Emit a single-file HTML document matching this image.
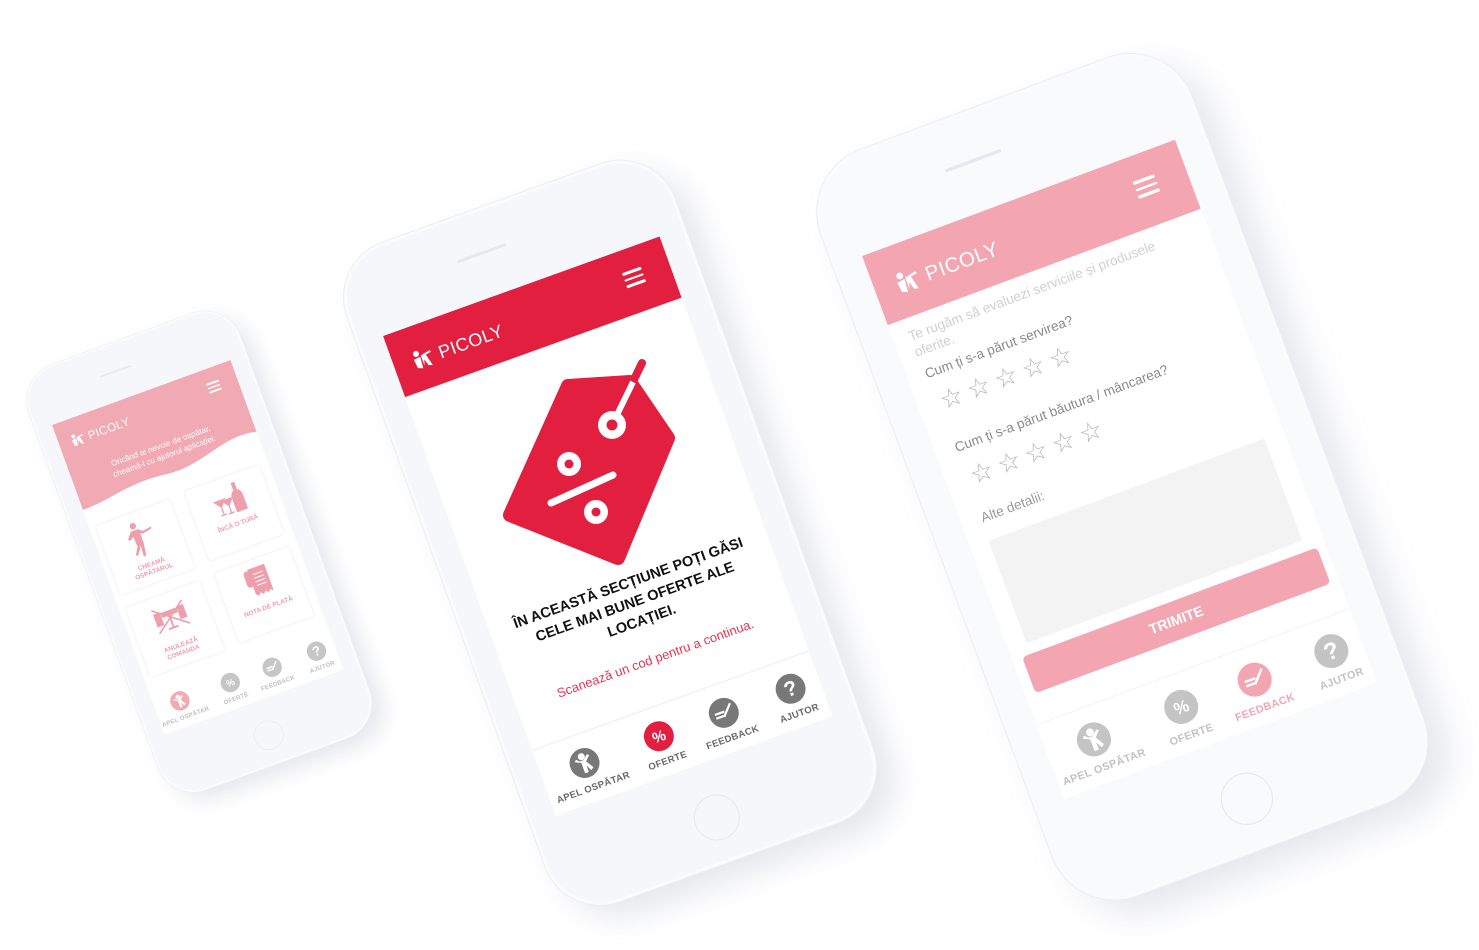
<!DOCTYPE html>
<html><head><meta charset="utf-8">
<style>
html,body{margin:0;padding:0;background:#fff;width:1479px;height:950px;overflow:hidden;font-family:"Liberation Sans",sans-serif;}
.ph{position:absolute;width:294px;height:510px;transform-origin:0 0;}
.body{position:absolute;left:-27px;top:-88px;width:348px;height:700px;border-radius:58px;background:#f6f7fa;box-shadow:0 0 0 1px #eceef3,14px 18px 30px rgba(140,145,175,0.22),inset 0 0 0 3px #fbfbfd;}
.spk{position:absolute;left:148px;top:42px;width:52px;height:3px;margin-left:-26px;border-radius:2px;background:#e6e8ee;}
.home{position:absolute;left:177px;top:653px;width:44px;height:44px;margin-left:-22px;margin-top:-22px;border-radius:50%;border:1.5px solid #e6e8ee;}
.scr{position:absolute;left:0;top:0;width:294px;height:510px;background:#fff;overflow:hidden;}
.hdr{position:absolute;left:0;top:0;width:294px;height:65px;}
.logo{position:absolute;left:18px;top:22px;height:26px;display:flex;align-items:center;color:#fff;font-size:18px;letter-spacing:0.5px;}
.ham{position:absolute;left:246px;top:22px;width:20px;}
.ham i{display:block;height:2.5px;background:#fff;margin-bottom:4px;border-radius:1px;}
.nav{position:absolute;left:0;top:440px;width:294px;height:70px;border-top:1px solid #ececec;}
.ni{position:absolute;top:14px;width:30px;height:30px;margin-left:-15px;}
.nl{position:absolute;top:50px;width:100px;margin-left:-50px;text-align:center;font-size:9.5px;font-weight:bold;color:#6a6a6a;letter-spacing:0.3px;}
.card{position:absolute;background:#fff;border-radius:4px;box-shadow:0 0 4px rgba(0,0,0,0.12);text-align:center;color:#ef9aa8;font-weight:bold;font-size:10px;}
.card span{position:absolute;left:0;right:0;}
</style></head><body>

<!-- LEFT PHONE -->
<div class="ph" style="left:52px;top:425px;transform:rotate(-20deg) scale(0.646);opacity:0.95">
 <div class="body"><div class="spk"></div><div class="home"></div></div>
 <div class="scr">
  <svg style="position:absolute;left:0;top:0" width="294" height="150"><path d="M0 0 H294 V118 C240 105 200 140 140 132 C80 124 50 140 0 140 Z" fill="#f1a5b0"/></svg>
  <div class="logo"><svg width="26" height="26" viewBox="0 0 26 26"><circle cx="7" cy="6" r="3" fill="#fff"/><path d="M3 11 L10 10 L9 22 L4 20 Z M11 9 L21 7 L22 9 L16 10 L19 22 L15 21 L13 14 L11 20 Z" fill="#fff"/></svg><span style="margin-left:3px">PICOLY</span></div>
  <div class="ham"><i></i><i></i><i></i></div>
  <div style="position:absolute;left:0;width:294px;top:80px;text-align:center;color:#fff;font-size:12.5px;line-height:17px">Oricând ai nevoie de ospătar,<br>cheamă-l cu ajutorul aplicației.</div>
  <div class="card" style="left:10px;top:170px;width:122px;height:114px">
   <svg style="position:absolute;left:36px;top:14px" width="50" height="58" viewBox="0 0 50 58"><circle cx="18" cy="6" r="5" fill="#ef9aa8"/><path d="M12 13 L24 13 L30 18 L44 16 L44 19 L29 22 L25 20 L25 36 L22 56 L18 56 L19 38 L16 44 L10 52 L7 50 L14 38 L13 22 L6 26 L4 23 Z" fill="#ef9aa8"/></svg>
   <span style="top:80px;line-height:12px">CHEAMĂ<br>OSPĂTARUL</span></div>
  <div class="card" style="left:157px;top:167px;width:123px;height:114px">
   <svg style="position:absolute;left:34px;top:10px" width="56" height="50" viewBox="0 0 56 50"><path d="M38 2 H44 V14 C50 18 50 22 50 26 V48 H32 V26 C32 22 32 18 38 14 Z" fill="#ef9aa8"/><path d="M4 22 H20 L12 32 Z M12 32 V44 M7 45 H17 M16 24 H32 L24 34 Z M24 34 V45 M19 46 H29" fill="#ef9aa8" stroke="#ef9aa8" stroke-width="2"/></svg>
   <span style="top:70px">ÎNCĂ O TURĂ</span></div>
  <div class="card" style="left:10px;top:305px;width:122px;height:114px">
   <svg style="position:absolute;left:30px;top:10px" width="62" height="56" viewBox="0 0 62 56"><path d="M6 8 L56 46 M56 8 L6 46" stroke="#ef9aa8" stroke-width="2.5"/><rect x="18" y="16" width="26" height="8" fill="#ef9aa8"/><path d="M8 16 H16 V34 H8 Z M46 16 H54 V34 H46 Z M30 24 V44 M22 44 H38" fill="#ef9aa8" stroke="#ef9aa8" stroke-width="3"/></svg>
   <span style="top:78px;line-height:12px">ANULEAZĂ<br>COMANDA</span></div>
  <div class="card" style="left:157px;top:302px;width:123px;height:114px">
   <svg style="position:absolute;left:40px;top:10px" width="44" height="52" viewBox="0 0 44 52"><rect x="2" y="4" width="10" height="26" rx="5" fill="#ef9aa8"/><path d="M10 2 H38 V46 L34 42 L30 46 L26 42 L22 46 L18 42 L14 46 L10 42 Z" fill="#ef9aa8"/><path d="M16 12 H32 M16 18 H32 M16 24 H32 M16 30 H32" stroke="#fff" stroke-width="1.5"/></svg>
   <span style="top:72px">NOTA DE PLATĂ</span></div>
  <div class="nav" style="border-top:none">
   <svg class="ni" style="left:40px" viewBox="0 0 30 30"><circle cx="15" cy="15" r="15" fill="#f1a5b0"/><circle cx="14" cy="8" r="3.5" fill="#fff"/><path d="M6 11 L12 14 L12 25 L16 25 L16 18 L19 24 L22 22 L17 14 L22 9 L20 7.5 L15 12 L11 12 L8 9 Z" fill="#fff"/></svg>
   <div class="nl" style="left:40px;color:#bdbdbd">APEL OSPĂTAR</div>
   <svg class="ni" style="left:123px" viewBox="0 0 30 30"><circle cx="15" cy="15" r="15" fill="#c4c4c4"/><text x="15" y="20.5" text-anchor="middle" font-size="15" font-weight="bold" fill="#fff" font-family="Liberation Sans">%</text></svg>
   <div class="nl" style="left:123px;color:#bdbdbd">OFERTE</div>
   <svg class="ni" style="left:192px" viewBox="0 0 30 30"><circle cx="15" cy="15" r="15" fill="#c4c4c4"/><path d="M6 14 H16 M6 18 H14 M14 19 L24 8" stroke="#fff" stroke-width="2.2"/></svg>
   <div class="nl" style="left:192px;color:#bdbdbd">FEEDBACK</div>
   <svg class="ni" style="left:265px" viewBox="0 0 30 30"><circle cx="15" cy="15" r="15" fill="#c4c4c4"/><text x="15" y="22" text-anchor="middle" font-size="21" font-weight="bold" fill="#fff" font-family="Liberation Sans">?</text></svg>
   <div class="nl" style="left:265px;color:#bdbdbd">AJUTOR</div>
  </div>
 </div>
</div>

<!-- MIDDLE PHONE -->
<div class="ph" style="left:383px;top:336px;transform:rotate(-19.8deg)">
 <div class="body"><div class="spk"></div><div class="home"></div></div>
 <div class="scr">
  <div class="hdr" style="background:#e21f3f"></div>
  <div class="logo"><svg width="26" height="26" viewBox="0 0 26 26"><circle cx="7" cy="6" r="3" fill="#fff"/><path d="M3 11 L10 10 L9 22 L4 20 Z M11 9 L21 7 L22 9 L16 10 L19 22 L15 21 L13 14 L11 20 Z" fill="#fff"/></svg><span style="margin-left:3px">PICOLY</span></div>
  <div class="ham"><i></i><i></i><i></i></div>
  <div style="position:absolute;left:0;width:294px;top:306px;text-align:center;color:#111;font-size:14.5px;font-weight:bold;line-height:20px">ÎN ACEASTĂ SECȚIUNE POȚI GĂSI<br>CELE MAI BUNE OFERTE ALE<br>LOCAȚIEI.</div>
  <div style="position:absolute;left:0;width:294px;top:388px;text-align:center;color:#e5334f;font-size:13px">Scanează un cod pentru a continua.</div>
  <div class="nav">
   <svg class="ni" style="left:45px" viewBox="0 0 30 30"><circle cx="15" cy="15" r="15" fill="#787878"/><circle cx="14" cy="8" r="3.5" fill="#fff"/><path d="M6 11 L12 14 L12 25 L16 25 L16 18 L19 24 L22 22 L17 14 L22 9 L20 7.5 L15 12 L11 12 L8 9 Z" fill="#fff"/></svg>
   <div class="nl" style="left:45px">APEL OSPĂTAR</div>
   <svg class="ni" style="left:124px" viewBox="0 0 30 30"><circle cx="15" cy="15" r="15" fill="#e21f3f"/><text x="15" y="20.5" text-anchor="middle" font-size="15" font-weight="bold" fill="#fff" font-family="Liberation Sans">%</text></svg>
   <div class="nl" style="left:124px">OFERTE</div>
   <svg class="ni" style="left:193px" viewBox="0 0 30 30"><circle cx="15" cy="15" r="15" fill="#787878"/><path d="M6 14 H16 M6 18 H14 M14 19 L24 8" stroke="#fff" stroke-width="2.2"/></svg>
   <div class="nl" style="left:193px">FEEDBACK</div>
   <svg class="ni" style="left:264px" viewBox="0 0 30 30"><circle cx="15" cy="15" r="15" fill="#787878"/><text x="15" y="22" text-anchor="middle" font-size="21" font-weight="bold" fill="#fff" font-family="Liberation Sans">?</text></svg>
   <div class="nl" style="left:264px">AJUTOR</div>
  </div>
 </div>
</div>
<!-- tag icon in page coordinates -->
<svg style="position:absolute;left:0;top:0" width="1479" height="950">
 <polygon points="568,386 630,382 668,438 618,558 510,515" fill="#e21f3f" stroke="#e21f3f" stroke-width="14" stroke-linejoin="round"/>
 <line x1="612" y1="425" x2="642" y2="363" stroke="#e21f3f" stroke-width="8" stroke-linecap="round"/>
 <line x1="612" y1="425" x2="633" y2="382" stroke="#fff" stroke-width="6"/>
 <circle cx="612" cy="425" r="14" fill="#fff"/><circle cx="612" cy="425" r="5.5" fill="#e21f3f"/>
 <circle cx="569" cy="464" r="12" fill="#fff"/><circle cx="569" cy="464" r="4.5" fill="#e21f3f"/>
 <circle cx="596" cy="512" r="12" fill="#fff"/><circle cx="596" cy="512" r="4.5" fill="#e21f3f"/>
 <line x1="551" y1="503" x2="613" y2="475" stroke="#fff" stroke-width="7" stroke-linecap="round"/>
</svg>

<!-- RIGHT PHONE -->
<div class="ph" style="left:862px;top:256px;transform:rotate(-20.4deg) scale(1.136)">
 <div class="body" style="background:#f9fafc"><div class="spk"></div><div class="home"></div></div>
 <div class="scr">
  <div class="hdr" style="background:#f3a6b1"></div>
  <div class="logo"><svg width="26" height="26" viewBox="0 0 26 26"><circle cx="7" cy="6" r="3" fill="#fff"/><path d="M3 11 L10 10 L9 22 L4 20 Z M11 9 L21 7 L22 9 L16 10 L19 22 L15 21 L13 14 L11 20 Z" fill="#fff"/></svg><span style="margin-left:3px">PICOLY</span></div>
  <div class="ham"><i></i><i></i><i></i></div>
  <div style="position:absolute;left:14px;top:74px;width:270px;color:#d0d0d0;font-size:12px;line-height:15px">Te rugăm să evaluezi serviciile și produsele oferite.</div>
  <div style="position:absolute;left:16px;top:110px;color:#8a8a8a;font-size:12px">Cum ți s-a părut servirea?</div>
  <div style="position:absolute;left:20px;top:131px;color:#b5b5b5;font-size:23px;letter-spacing:5px">☆☆☆☆☆</div>
  <div style="position:absolute;left:18px;top:180px;color:#8a8a8a;font-size:12px">Cum ți s-a părut băutura / mâncarea?</div>
  <div style="position:absolute;left:22px;top:202px;color:#b5b5b5;font-size:23px;letter-spacing:5px">☆☆☆☆☆</div>
  <div style="position:absolute;left:18px;top:246px;color:#9a9a9a;font-size:12px">Alte detalii:</div>
  <div style="position:absolute;left:17px;top:274px;width:259px;height:96px;background:#f3f3f3"></div>
  <div style="position:absolute;left:9px;top:380px;width:277px;height:34px;background:#f3a6b1;border-radius:4px;color:#fff;font-weight:bold;font-size:12.5px;text-align:center;line-height:34px">TRIMITE</div>
  <div class="nav" style="border-top:1px solid #f4f4f4">
   <svg class="ni" style="left:43px" viewBox="0 0 30 30"><circle cx="15" cy="15" r="15" fill="#c4c4c4"/><circle cx="14" cy="8" r="3.5" fill="#fff"/><path d="M6 11 L12 14 L12 25 L16 25 L16 18 L19 24 L22 22 L17 14 L22 9 L20 7.5 L15 12 L11 12 L8 9 Z" fill="#fff"/></svg>
   <div class="nl" style="left:43px;color:#c2c2c2">APEL OSPĂTAR</div>
   <svg class="ni" style="left:125px" viewBox="0 0 30 30"><circle cx="15" cy="15" r="15" fill="#c4c4c4"/><text x="15" y="20.5" text-anchor="middle" font-size="15" font-weight="bold" fill="#fff" font-family="Liberation Sans">%</text></svg>
   <div class="nl" style="left:125px;color:#c2c2c2">OFERTE</div>
   <svg class="ni" style="left:194px" viewBox="0 0 30 30"><circle cx="15" cy="15" r="15" fill="#f3a6b1"/><path d="M6 14 H16 M6 18 H14 M14 19 L24 8" stroke="#fff" stroke-width="2.2"/></svg>
   <div class="nl" style="left:194px;color:#f3a6b1">FEEDBACK</div>
   <svg class="ni" style="left:266px" viewBox="0 0 30 30"><circle cx="15" cy="15" r="15" fill="#c4c4c4"/><text x="15" y="22" text-anchor="middle" font-size="21" font-weight="bold" fill="#fff" font-family="Liberation Sans">?</text></svg>
   <div class="nl" style="left:266px;color:#c2c2c2">AJUTOR</div>
  </div>
 </div>
</div>
</body></html>
